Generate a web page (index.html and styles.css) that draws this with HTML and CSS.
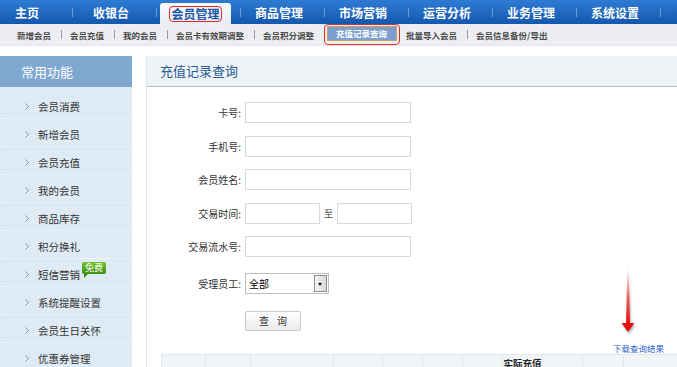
FILE: index.html
```html
<!DOCTYPE html>
<html lang="zh-CN">

<head>
    <meta charset="utf-8">
    <meta name="viewport" content="width=device-width, initial-scale=1.0">
    <title>充值记录查询</title>
    <link rel="stylesheet" href="styles.css">
</head>

<body>
    <header class="topbar">
        <ul class="mainnav">
            <li><a href="#">主页</a></li>
            <li><a href="#">收银台</a></li>
            <li><a href="#" class="active"><span class="mark">会员管理</span></a></li>
            <li><a href="#">商品管理</a></li>
            <li><a href="#">市场营销</a></li>
            <li><a href="#">运营分析</a></li>
            <li><a href="#">业务管理</a></li>
            <li><a href="#">系统设置</a></li>
        </ul>
    </header>

    <nav class="subnav">
        <a href="#">新增会员</a><span class="sep"></span>
        <a href="#">会员充值</a><span class="sep"></span>
        <a href="#">我的会员</a><span class="sep"></span>
        <a href="#">会员卡有效期调整</a><span class="sep"></span>
        <a href="#">会员积分调整</a>
        <a href="#" class="current"><span>充值记录查询</span></a>
        <a href="#">批量导入会员</a><span class="sep"></span>
        <a href="#">会员信息备份/导出</a>
    </nav>

    <div class="layout">
        <aside class="sidebar">
            <h3>常用功能</h3>
            <ul class="menu">
                <li><svg class="chev" width="4" height="7" viewBox="0 0 4 7"><polyline points="0.5,0.5 3.5,3.5 0.5,6.5" /></svg>会员消费</li>
                <li><svg class="chev" width="4" height="7" viewBox="0 0 4 7"><polyline points="0.5,0.5 3.5,3.5 0.5,6.5" /></svg>新增会员</li>
                <li><svg class="chev" width="4" height="7" viewBox="0 0 4 7"><polyline points="0.5,0.5 3.5,3.5 0.5,6.5" /></svg>会员充值</li>
                <li><svg class="chev" width="4" height="7" viewBox="0 0 4 7"><polyline points="0.5,0.5 3.5,3.5 0.5,6.5" /></svg>我的会员</li>
                <li><svg class="chev" width="4" height="7" viewBox="0 0 4 7"><polyline points="0.5,0.5 3.5,3.5 0.5,6.5" /></svg>商品库存</li>
                <li><svg class="chev" width="4" height="7" viewBox="0 0 4 7"><polyline points="0.5,0.5 3.5,3.5 0.5,6.5" /></svg>积分换礼</li>
                <li><svg class="chev" width="4" height="7" viewBox="0 0 4 7"><polyline points="0.5,0.5 3.5,3.5 0.5,6.5" /></svg>短信营销<span class="badge">免费</span></li>
                <li><svg class="chev" width="4" height="7" viewBox="0 0 4 7"><polyline points="0.5,0.5 3.5,3.5 0.5,6.5" /></svg>系统提醒设置</li>
                <li><svg class="chev" width="4" height="7" viewBox="0 0 4 7"><polyline points="0.5,0.5 3.5,3.5 0.5,6.5" /></svg>会员生日关怀</li>
                <li><svg class="chev" width="4" height="7" viewBox="0 0 4 7"><polyline points="0.5,0.5 3.5,3.5 0.5,6.5" /></svg>优惠券管理</li>
            </ul>
        </aside>

        <main class="panel">
            <h2 class="panel-head">充值记录查询</h2>

            <form class="search">
                <div class="field">
                    <label>卡号:</label>
                    <input type="text">
                </div>
                <div class="field">
                    <label>手机号:</label>
                    <input type="text">
                </div>
                <div class="field">
                    <label>会员姓名:</label>
                    <input type="text">
                </div>
                <div class="field">
                    <label>交易时间:</label>
                    <input type="text" class="short">
                    <span class="to">至</span>
                    <input type="text" class="short">
                </div>
                <div class="field">
                    <label>交易流水号:</label>
                    <input type="text">
                </div>
                <div class="field field-select">
                    <label>受理员工:</label>
                    <div class="select-box">
                        <select>
                            <option>全部</option>
                        </select>
                        <span class="select-arrow"></span>
                    </div>
                </div>
                <div class="field field-btn">
                    <label></label>
                    <button type="button" class="btn">查询</button>
                </div>
            </form>

            <div class="tools"><a href="#">下载查询结果</a></div>

            <table class="result">
                <thead>
                    <tr>
                        <th style="width:44px"></th>
                        <th style="width:45px"></th>
                        <th style="width:83px"></th>
                        <th style="width:49px"></th>
                        <th style="width:40px"></th>
                        <th style="width:40px"></th>
                        <th style="width:40px"></th>
                        <th style="width:40px">实际充值</th>
                        <th style="width:40px"></th>
                        <th style="width:41px"></th>
                        <th style="width:60px"></th>
                    </tr>
                </thead>
            </table>

            <svg class="arrow" width="16" height="66" viewBox="0 0 16 66">
                <defs>
                    <linearGradient id="shaft" x1="0" y1="0" x2="0" y2="1">
                        <stop offset="0" stop-color="#ff6a6a" stop-opacity="0" />
                        <stop offset="0.55" stop-color="#f23a3a" stop-opacity="0.8" />
                        <stop offset="1" stop-color="#e31212" />
                    </linearGradient>
                </defs>
                <polygon points="7.3,0 8.7,0 10,55 6,55" fill="url(#shaft)" />
                <polygon points="1.5,55 14.5,55 8,64" fill="#e31010" />
            </svg>
        </main>
    </div>
</body>

</html>
```

FILE: styles.css
```css
* {
    margin: 0;
    padding: 0;
    box-sizing: border-box;
}

body {
    width: 677px;
    overflow: hidden;
    font-family: "Noto Sans CJK SC", "Noto Sans", sans-serif;
    color: #333;
    background-color: #fff;
}

a {
    color: inherit;
    text-decoration: none;
}

ul {
    list-style: none;
}

/* hovedmenu */
.topbar {
    height: 24px;
    background: linear-gradient(#2f7bd3, #1457ae);
    overflow: hidden;
}

.mainnav {
    display: flex;
    height: 24px;
    margin-left: -11px;
}

.mainnav li {
    display: flex;
    align-items: center;
    flex: none;
    width: 84px;
}

.mainnav li::after {
    content: "";
    width: 1px;
    height: 9px;
    margin-left: 7px;
    background-color: #6e9ad6;
}

.mainnav a {
    display: flex;
    align-items: center;
    justify-content: center;
    width: 76px;
    height: 24px;
    color: #fff;
    font-size: 12px;
    font-weight: bold;
}

.mainnav a.active {
    align-self: flex-end;
    width: 71px;
    height: 21px;
    margin: 0 2px 0 3px;
    border-radius: 3px 3px 0 0;
    background: linear-gradient(#f7f9fb, #e8edf2);
    color: #1a56a6;
}

.mark {
    border: 1.5px solid #e3262b;
    border-radius: 4px;
    padding: 0 1px;
    line-height: 14px;
}

/* undermenu */
.subnav {
    display: flex;
    align-items: center;
    height: 22px;
    padding-left: 17px;
    background-color: #eceef1;
    border-bottom: 1px solid #e3e6ea;
    font-size: 8.5px;
    font-weight: bold;
    color: #4a4a4a;
}

.subnav .sep {
    width: 1px;
    height: 9px;
    margin: 0 8px 0 10px;
    background-color: #9a9a9a;
}

.subnav .current {
    margin: 0 6px 0 10px;
    padding: 1.5px 2.5px 3px 1.5px;
    border: 1.5px solid #e32a2a;
    border-radius: 4px;
}

.subnav .current span {
    display: block;
    padding: 0 8.5px;
    line-height: 13px;
    background-color: #7d9fcd;
    border: 1px solid #c6a266;
    color: #fff;
}

/* layout */
.layout {
    display: flex;
    margin-top: 10px;
}

.sidebar {
    flex: none;
    width: 132px;
    min-height: 320px;
    background-color: #deeaf4;
}

.sidebar h3 {
    height: 31px;
    padding-left: 21px;
    line-height: 31px;
    background-color: #7fa8d1;
    color: #fff;
    font-size: 13px;
    font-weight: normal;
}

.menu {
    padding-top: 4px;
}

.menu li {
    position: relative;
    display: flex;
    align-items: center;
    height: 28px;
    padding: 3px 0 0 25px;
    border-bottom: 1px dotted #f6fafd;
    font-size: 10.5px;
    color: #333;
}

.chev {
    margin-right: 9px;
    fill: none;
    stroke: #8a8f95;
    stroke-width: 1;
}

.badge {
    position: absolute;
    left: 82px;
    top: 3px;
    width: 24px;
    height: 12px;
    border-radius: 2px;
    background: linear-gradient(#72c22d, #3f9214);
    color: #fff;
    font-size: 9px;
    line-height: 12px;
    text-align: center;
}

.badge::after {
    content: "";
    position: absolute;
    left: 2px;
    top: 12px;
    border-top: 4px solid #3f9214;
    border-right: 4px solid transparent;
}

/* indhold */
.panel {
    position: relative;
    flex: 1;
    min-width: 0;
    min-height: 330px;
    margin-left: 14px;
    border-left: 1px solid #dbe4ec;
    overflow: hidden;
}

.panel-head {
    height: 31px;
    padding-left: 13px;
    line-height: 30px;
    background-color: #eef3f8;
    border-bottom: 1px solid #b2c5d8;
    color: #28598e;
    font-size: 13px;
    font-weight: normal;
}

.search {
    display: flex;
    flex-direction: column;
    gap: 12.5px;
    padding-top: 15px;
}

.field {
    display: flex;
    align-items: center;
    height: 21px;
}

.field label {
    flex: none;
    width: 94px;
    margin-right: 4px;
    text-align: right;
    font-size: 10px;
    color: #333;
}

.field input {
    width: 166px;
    height: 21px;
    border: 1px solid #d9d9d9;
    background-color: #fff;
}

.field input.short {
    width: 75px;
}

.to {
    margin: 0 4px;
    font-size: 9px;
    color: #444;
}

.field-select {
    margin-top: 3.5px;
}

.select-box {
    display: flex;
    width: 84px;
    height: 21px;
    border: 1px solid #bdbdbd;
    background-color: #fff;
}

.select-box select {
    flex: 1;
    min-width: 0;
    padding-left: 3px;
    border: none;
    outline: none;
    appearance: none;
    background: transparent;
    font-family: inherit;
    font-size: 10px;
    color: #000;
}

.select-arrow {
    position: relative;
    flex: none;
    width: 13px;
    margin: 1px;
    border: 1px solid #8d8d8d;
    background: linear-gradient(90deg, #f4f4f4, #d9d9d9);
}

.select-arrow::after {
    content: "";
    position: absolute;
    left: 3px;
    top: 7px;
    border-top: 3px solid #111;
    border-left: 2.5px solid transparent;
    border-right: 2.5px solid transparent;
}

.field-btn {
    height: 20px;
    margin-top: 4px;
}

.btn {
    width: 56px;
    height: 20px;
    border: 1px solid #c9c9c9;
    border-radius: 2px;
    background: linear-gradient(#ffffff, #ebebeb);
    font-family: inherit;
    font-size: 10px;
    color: #333;
    letter-spacing: 8px;
    text-indent: 8px;
}

.tools {
    height: 12px;
    margin-top: 11px;
    padding-right: 13px;
    text-align: right;
    font-size: 8.5px;
    line-height: 12px;
}

.tools a {
    color: #2e5fca;
}

.result {
    width: 522px;
    margin-left: 14px;
    border-collapse: collapse;
    table-layout: fixed;
}

.result th {
    height: 44px;
    padding-top: 2px;
    border: 1px solid #e2e7eb;
    background-color: #f1f5f8;
    font-size: 9.5px;
    line-height: 12px;
    font-weight: bold;
    color: #222;
    vertical-align: top;
}

.arrow {
    position: absolute;
    left: 473px;
    top: 212px;
    filter: drop-shadow(1px 2px 1px rgba(0, 0, 0, 0.3));
}
```
